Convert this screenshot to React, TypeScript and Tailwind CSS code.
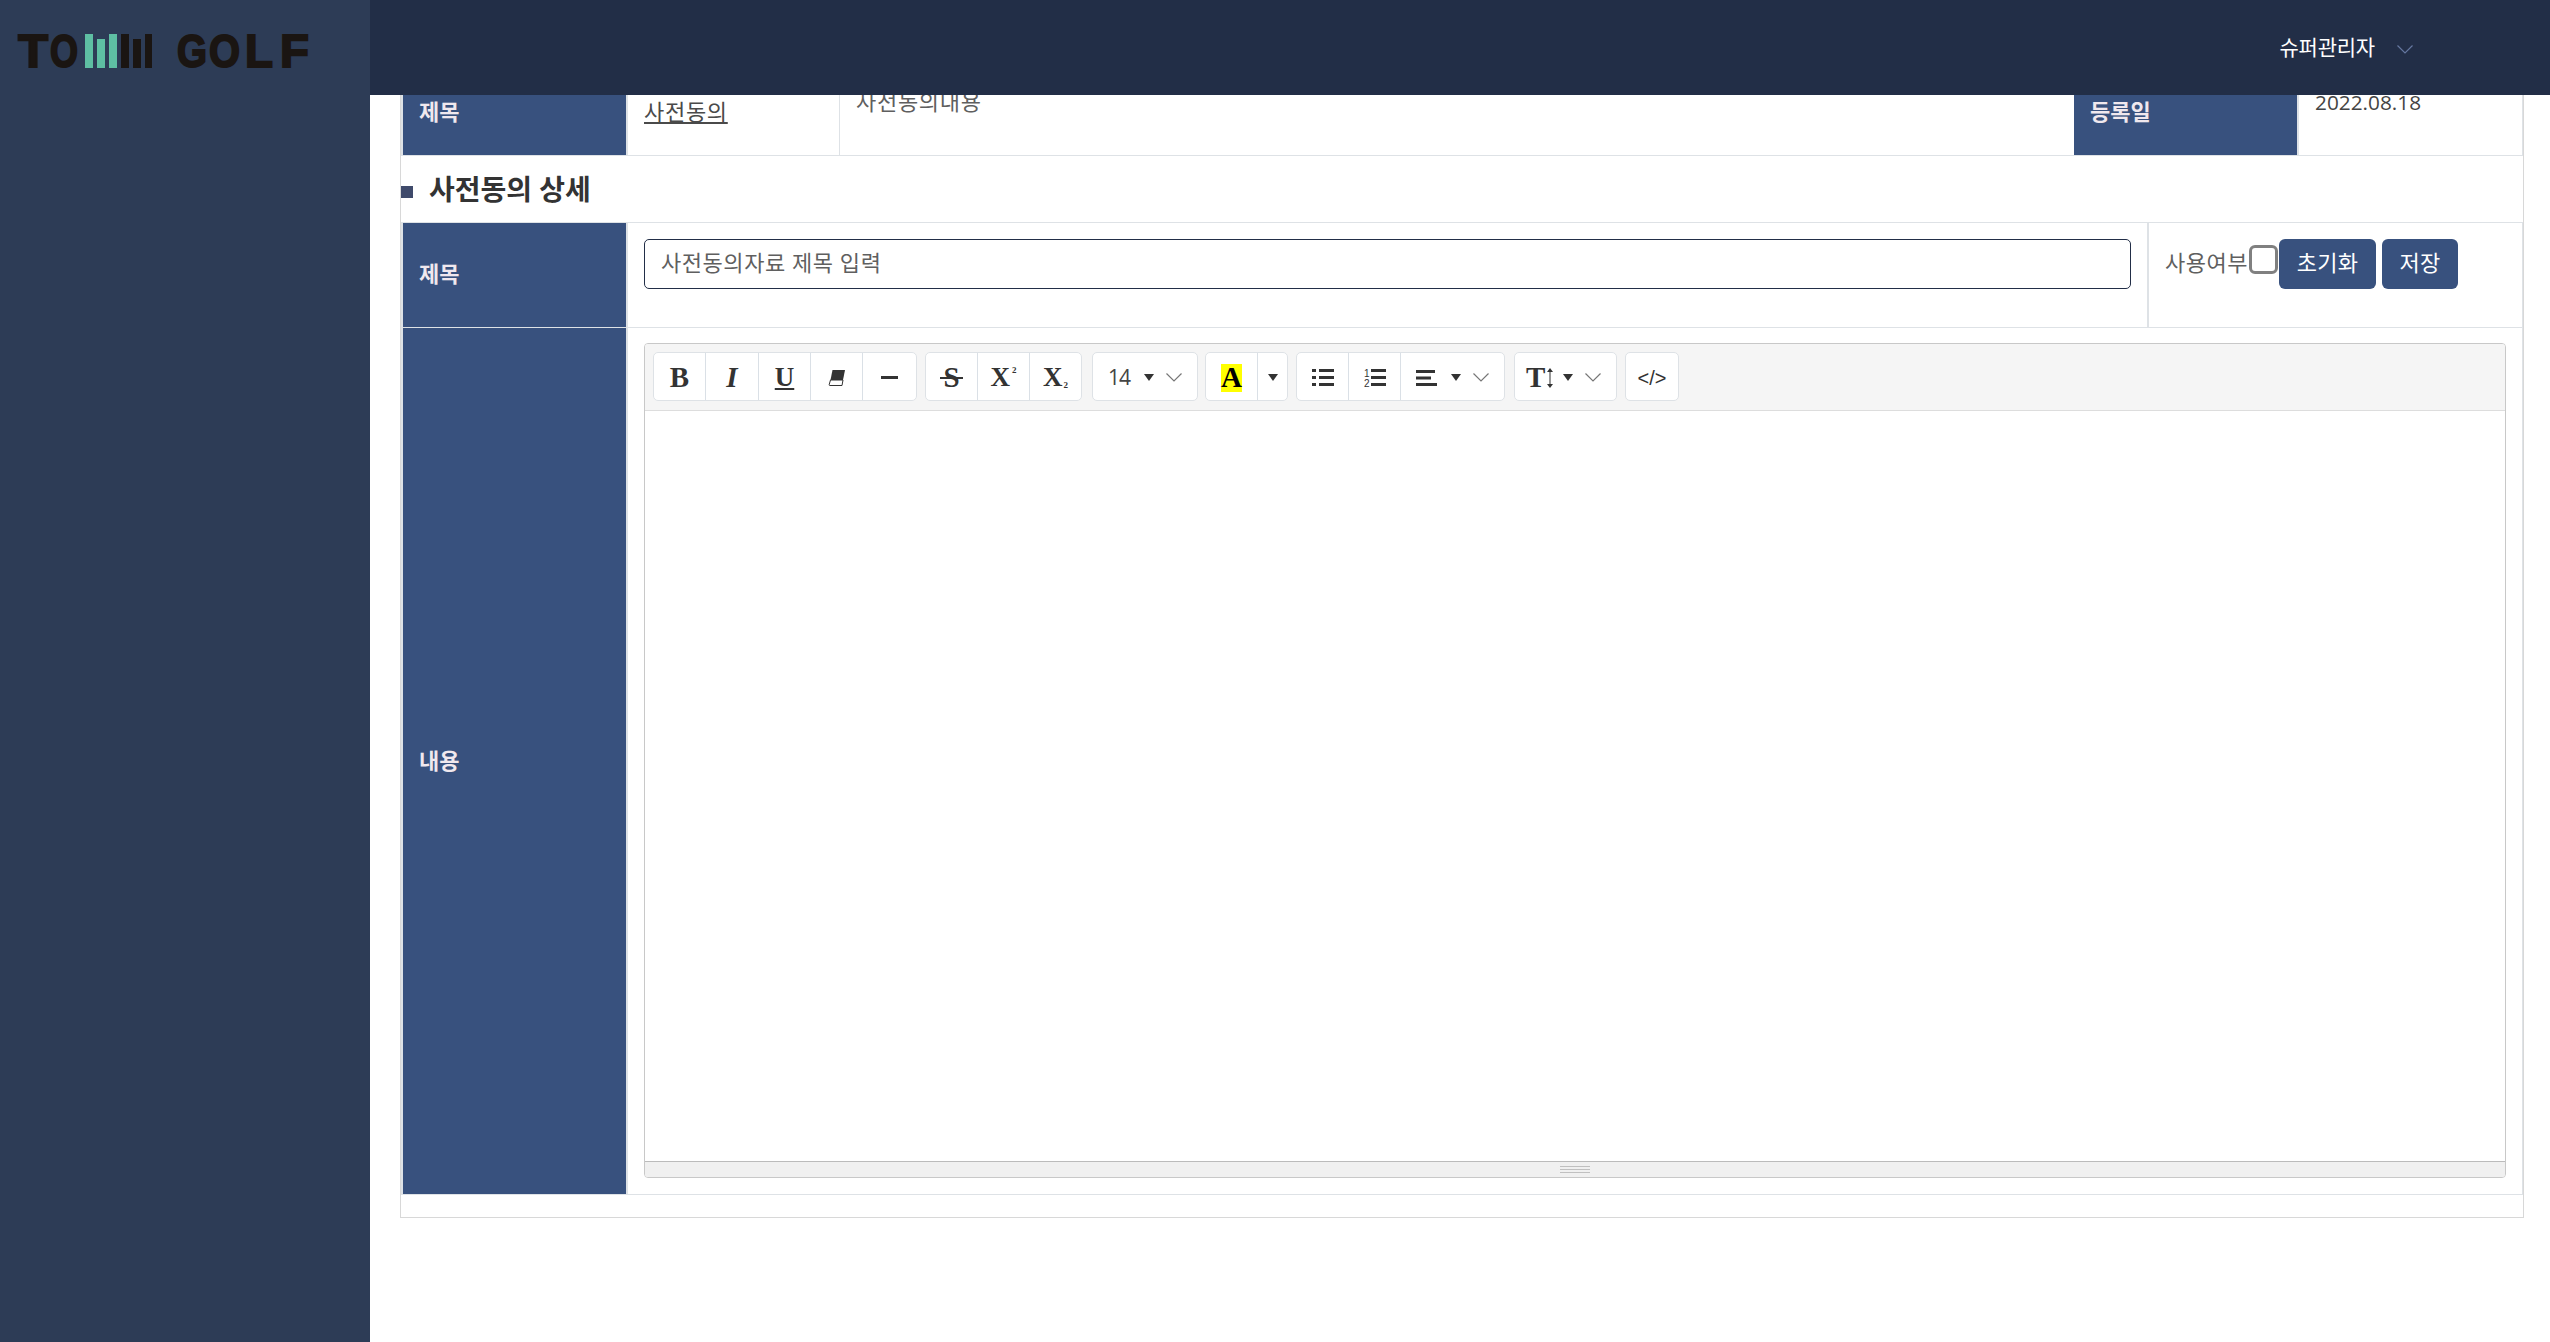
import type { ReactNode } from 'react';

const ko = "font-['Open_Sans','Noto_Sans_CJK_KR',sans-serif]";

function Chevron({ className = 'text-[#777]' }: { className?: string }) {
  return (
    <svg width="16" height="9" viewBox="0 0 16 9" fill="none" className={className}>
      <path d="M0.5 0.5 L8 8 L15.5 0.5" stroke="currentColor" strokeWidth="1.2" />
    </svg>
  );
}

function Caret() {
  return (
    <svg width="10" height="7" viewBox="0 0 10 7">
      <path d="M0 0 H10 L5 7 Z" fill="#333" />
    </svg>
  );
}

function Logo() {
  const letter = "font-['Liberation_Sans',sans-serif] font-bold";
  return (
    <svg width="300" height="60" viewBox="0 0 300 60" className="mt-[21px] ml-[15px]">
      <g fill="#1a1512" stroke="#1a1512" strokeWidth="2" className={letter} fontSize="47">
        <text x="3" y="46" textLength="30" lengthAdjust="spacingAndGlyphs">T</text>
        <text x="35" y="46" textLength="28" lengthAdjust="spacingAndGlyphs">O</text>
      </g>
      <g fill="#5ebfa3">
        <rect x="70" y="13" width="8" height="34" />
        <rect x="82" y="18" width="8" height="29" />
        <rect x="94" y="13" width="8" height="34" />
      </g>
      <g fill="#1a1512">
        <rect x="106" y="13" width="8" height="34" />
        <rect x="118" y="18" width="8" height="29" />
        <rect x="130" y="13" width="7" height="34" />
      </g>
      <g fill="#1a1512" stroke="#1a1512" strokeWidth="2" className={letter} fontSize="47">
        <text x="162" y="46" textLength="30" lengthAdjust="spacingAndGlyphs">G</text>
        <text x="194" y="46" textLength="31" lengthAdjust="spacingAndGlyphs">O</text>
        <text x="230" y="46" textLength="28" lengthAdjust="spacingAndGlyphs">L</text>
        <text x="265" y="46" textLength="29" lengthAdjust="spacingAndGlyphs">F</text>
      </g>
    </svg>
  );
}

function Label({ children, className = '' }: { children: ReactNode; className?: string }) {
  return (
    <div className={`w-[223px] shrink-0 flex items-center pl-[16px] bg-[#38517e] text-[#f0e8ee] text-[22px] font-bold ${className}`}>
      {children}
    </div>
  );
}

function Btn({ w, children, last = false }: { w: number; children: ReactNode; last?: boolean }) {
  return (
    <div
      style={{ width: w }}
      className={`h-full flex items-center justify-center pt-[2px] text-[#333] ${last ? '' : 'border-r border-[#dae0e6]'}`}
    >
      {children}
    </div>
  );
}

function Group({ children, className = '' }: { children: ReactNode; className?: string }) {
  return (
    <div className={`h-[49px] flex items-stretch bg-white border border-[#dee2e6] rounded-[5px] ${className}`}>
      {children}
    </div>
  );
}

const serif = "font-['Liberation_Serif',serif] font-bold leading-none";

function Toolbar() {
  return (
    <div className="h-[67px] flex items-start gap-[8px] pl-[8px] pt-[8px] bg-[#f5f5f5] border-b border-[#dddddd]">
      <Group>
        <Btn w={52}><span className={`${serif} text-[29px]`}>B</span></Btn>
        <Btn w={53}><span className={`${serif} italic text-[29px]`}>I</span></Btn>
        <Btn w={52}><span className={`${serif} text-[27px] underline decoration-2 underline-offset-2`}>U</span></Btn>
        <Btn w={52}>
          <svg width="18" height="18" viewBox="0 0 18 18">
            <path d="M4.5 1 H17 L15 11 H2.5 Z" fill="#333" />
            <path d="M2.5 11 H15 L14 16.5 H2 Q1 16.5 1.2 15.5 Z" fill="#fff" stroke="#333" strokeWidth="1" />
          </svg>
        </Btn>
        <Btn w={53} last>
          <div className="w-[17px] h-[3px] bg-[#333]" />
        </Btn>
      </Group>
      <Group>
        <Btn w={52}>
          <div className="relative">
            <span className={`${serif} text-[29px]`}>S</span>
            <div className="absolute left-[-3px] right-[-3px] top-[14px] h-[2px] bg-[#333]" />
          </div>
        </Btn>
        <Btn w={52}>
          <span className={`${serif} text-[27px]`}>X</span>
          <span className={`${serif} text-[9px] mb-[14px] ml-[2px]`}>2</span>
        </Btn>
        <Btn w={51} last>
          <span className={`${serif} text-[27px]`}>X</span>
          <span className={`${serif} text-[9px] mt-[16px] ml-[1px]`}>2</span>
        </Btn>
      </Group>
      <Group className="ml-[2px]">
        <div className="w-[104px] h-full flex items-center pt-[2px] pl-[15px]">
          <span className="font-['Open_Sans',sans-serif] text-[21px] text-[#444] w-[21px] tracking-[-1px] whitespace-nowrap">14</span>
          <span className="ml-[15px] flex"><Caret /></span>
          <span className="ml-[12px] flex"><Chevron /></span>
        </div>
      </Group>
      <Group className="-ml-[1px]">
        <Btn w={52}>
          <span className={`${serif} text-[29px] text-black bg-[#ffff00] w-[21px] h-[28px] flex items-end justify-center`}>A</span>
        </Btn>
        <Btn w={29} last><Caret /></Btn>
      </Group>
      <Group>
        <Btn w={52}>
          <svg width="22" height="17" viewBox="0 0 22 17" fill="#333">
            <rect x="0" y="0" width="4" height="3" />
            <rect x="7" y="0" width="15" height="3" />
            <rect x="0" y="7" width="4" height="3" />
            <rect x="7" y="7" width="15" height="3" />
            <rect x="0" y="14" width="4" height="3" />
            <rect x="7" y="14" width="15" height="3" />
          </svg>
        </Btn>
        <Btn w={52}>
          <svg width="22" height="20" viewBox="0 0 22 20" fill="#333">
            <text x="0" y="9" fontSize="10" fontFamily="Liberation Sans, sans-serif">1</text>
            <text x="0" y="19" fontSize="10" fontFamily="Liberation Sans, sans-serif">2</text>
            <rect x="7" y="1" width="15" height="3" />
            <rect x="7" y="8" width="15" height="3" />
            <rect x="7" y="15" width="15" height="3" />
          </svg>
        </Btn>
        <div className="w-[103px] h-full flex items-center pt-[2px] pl-[15px]">
          <svg width="21" height="16" viewBox="0 0 21 16" fill="#333">
            <rect x="0" y="0" width="19" height="3" />
            <rect x="0" y="6.5" width="15" height="3" />
            <rect x="0" y="13" width="21" height="3" />
          </svg>
          <span className="ml-[14px] flex"><Caret /></span>
          <span className="ml-[12px] flex"><Chevron /></span>
        </div>
      </Group>
      <Group className="ml-[1px]">
        <div className="w-[101px] h-full flex items-center pt-[2px] pl-[11px]">
          <span className={`${serif} text-[29px] text-[#333]`}>T</span>
          <svg width="8" height="20" viewBox="0 0 8 20" className="ml-[1px]" fill="#333">
            <path d="M4 0 L7 4 H1 Z M4 20 L1 16 H7 Z" />
            <rect x="3.5" y="3" width="1" height="14" />
          </svg>
          <span className="ml-[9px] flex"><Caret /></span>
          <span className="ml-[12px] flex"><Chevron /></span>
        </div>
      </Group>
      <Group>
        <Btn w={52} last>
          <span className="font-['Liberation_Sans',sans-serif] text-[20px] text-[#333]">&lt;/&gt;</span>
        </Btn>
      </Group>
    </div>
  );
}

function Editor() {
  return (
    <div className="flex-1 flex flex-col border border-[#c8c8c8] rounded-[4px] overflow-hidden bg-white">
      <Toolbar />
      <div className="flex-1" />
      <div className="h-[16px] flex flex-col items-center justify-center gap-[2px] bg-[#f0f0f0] border-t border-[#bbbbbb]">
        <div className="w-[30px] h-px bg-[#c0c0c0]" />
        <div className="w-[30px] h-px bg-[#c0c0c0]" />
        <div className="w-[30px] h-px bg-[#c0c0c0]" />
      </div>
    </div>
  );
}

export default function App() {
  return (
    <div className={`flex h-[1342px] w-full overflow-hidden bg-white ${ko}`}>
      <aside className="w-[370px] shrink-0 bg-[#2d3c56]">
        <Logo />
      </aside>
      <div className="flex-1 flex flex-col min-w-0">
        <header className="h-[95px] shrink-0 flex items-center justify-end gap-[22px] pr-[137px] bg-[#222e47]">
          <span className="text-white text-[21px] tracking-[-0.2px]">슈퍼관리자</span>
          <span className="flex mt-[4px]"><Chevron className="text-[#6577a0]" /></span>
        </header>
        <main className="flex-1 overflow-hidden pl-[30px] pr-[26px]">
          <div className="-mt-[30px] border border-[#d8d8d8] h-[1153px]">
            {/* first row is scrolled partly under the header */}
            <div className="flex h-[90px] border-b border-[#dee2e6] border-l-2 border-r border-l-[#dee2e6] border-r-[#dee2e6]">
              <Label className="pt-[1px]">제목</Label>
              <div className="w-[214px] shrink-0 border-l-2 border-r border-[#dee2e6] pl-[16px] pt-[30px]">
                <a className="text-[22px] text-[#4a4a4a] underline tracking-[0.7px] leading-[30px]">사전동의</a>
              </div>
              <div className="flex-1 pl-[16px] pt-[20px] text-[22px] tracking-[0.7px] text-[#5f5f5f] leading-[30px]">사전동의내용</div>
              <Label className="pt-[1px]">등록일</Label>
              <div className="w-[225px] shrink-0 border-l-2 border-[#dee2e6] pl-[16px] pt-[21px] text-[20.8px] text-[#444] leading-[30px]">2022.08.18</div>
            </div>

            <div className="h-[67px] flex items-center border-b border-[#dee2e6]">
              <div className="w-[12px] h-[12px] bg-[#3f4a6b] mt-[5px]" />
              <h2 className="ml-[16px] text-[28px] font-bold text-[#333]">사전동의 상세</h2>
            </div>

            <div className="flex h-[105px] border-b border-[#dee2e6] border-l-2 border-r border-l-[#dee2e6] border-r-[#dee2e6]">
              <Label className="pb-[4px]">제목</Label>
              <div className="flex-1 border-l-2 border-[#dee2e6] px-[16px] pt-[16px]">
                <input
                  className="w-full h-[50px] px-[16px] pb-[4px] text-[22px] tracking-[0.55px] border border-[#222e47] rounded-[5px] outline-none placeholder:text-[#5f5f5f]"
                  placeholder="사전동의자료 제목 입력"
                />
              </div>
              <div className="w-[375px] shrink-0 border-l-2 border-[#dee2e6] pl-[16px] pt-[16px] flex items-start">
                <span className="text-[22px] tracking-[0.5px] text-[#5f5f5f] leading-[46px] w-[84px] whitespace-nowrap">사용여부</span>
                <input type="checkbox" className="appearance-none w-[29px] h-[29px] mt-[6px] border-[3px] border-[#808080] rounded-[6px] bg-white" />
                <button className="ml-[1px] w-[97px] h-[50px] rounded-[6px] bg-[#38517e] text-white text-[22px] tracking-[0.3px] pb-[4px]">초기화</button>
                <button className="ml-[6px] w-[76px] h-[50px] rounded-[6px] bg-[#38517e] text-white text-[22px] tracking-[0.3px] pb-[4px]">저장</button>
              </div>
            </div>

            <div className="flex h-[867px] border-b border-[#dee2e6] border-l-2 border-r border-l-[#dee2e6] border-r-[#dee2e6]">
              <Label className="pb-[2px]">내용</Label>
              <div className="flex-1 flex border-l-2 border-[#dee2e6] px-[16px] pt-[15px] pb-[16px]">
                <Editor />
              </div>
            </div>
          </div>
        </main>
      </div>
    </div>
  );
}
